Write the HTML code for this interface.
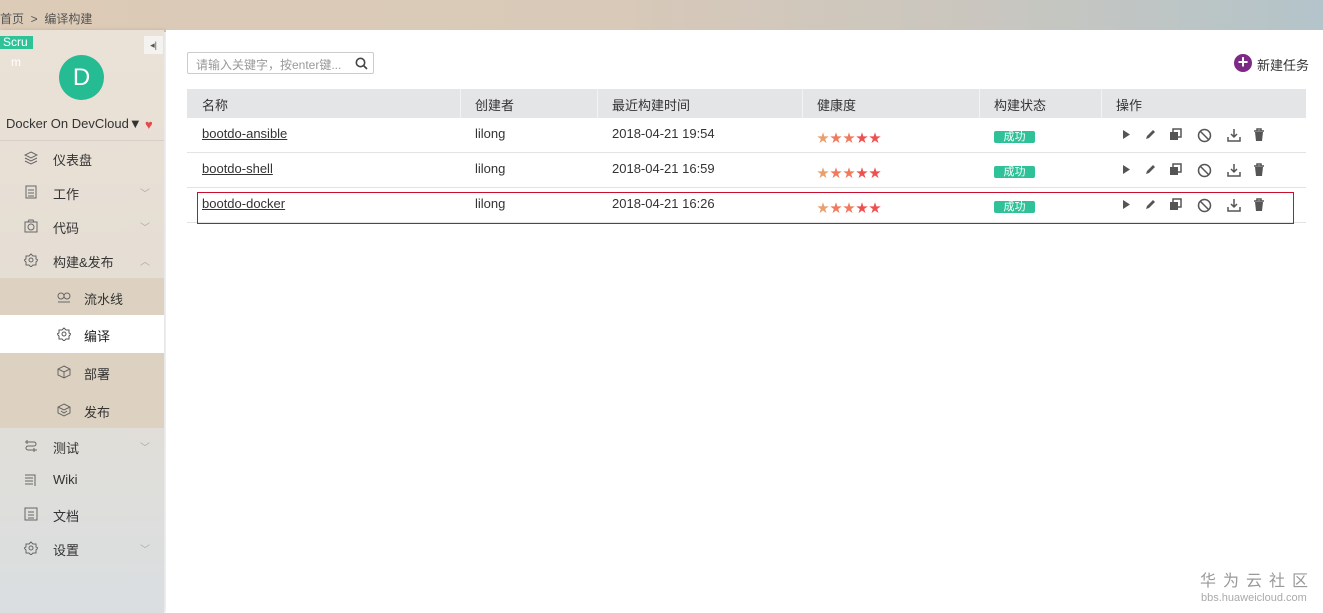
<!DOCTYPE html>
<html><head><meta charset="utf-8"><style>
*{margin:0;padding:0;box-sizing:border-box}
body{width:1323px;height:613px;overflow:hidden;position:relative;font-family:"Liberation Sans","Noto Sans CJK SC",sans-serif;font-size:13px;color:#333;background:#fff}
.top{position:absolute;left:0;top:0;width:1323px;height:32px;background:linear-gradient(90deg,#dccbb6 0%,#d9c9b8 45%,#c9c6bf 75%,#b3c4ca 100%)}
.crumb{position:absolute;left:0;top:10px;font-size:12px;color:#555}
.side{position:absolute;left:0;top:30px;width:164px;height:583px;background:linear-gradient(180deg,#ebe2d7 0%,#e4ddd3 50%,#dadee1 100%);box-shadow:2px 0 4px rgba(0,0,0,.12)}
.abs{position:absolute}
.mi{position:absolute;left:0;width:164px;height:34px;font-size:13px;color:#333}
.mi .t{position:absolute;left:53px;top:9px}
.mi .ic{position:absolute;left:24px;top:10px;width:14px;height:14px}
.mi .ar{position:absolute;left:140px;top:10px;color:#aaa;font-size:10px}
.sub{position:absolute;left:0;top:278px;width:164px;height:150px;background:#ddd2c1}
.si{position:absolute;left:0;width:164px;height:38px}
.si .t{position:absolute;left:84px;top:11px}
.si .ic{position:absolute;left:57px;top:12px;width:14px;height:14px}
.main{position:absolute;left:166px;top:30px;width:1157px;height:583px;background:#fff}
.search{position:absolute;left:187px;top:52px;width:187px;height:22px;border:1px solid #ccc;border-radius:2px;font-size:12px;color:#999;padding:3px 0 0 8px}
.th{position:absolute;left:187px;top:89px;width:1119px;height:29px;background:#e4e5e7}
.row{position:absolute;left:187px;width:1119px;height:35px;border-bottom:1px solid #e3e3e3}
.c{position:absolute;top:8px}
.th .c{top:6px;color:#333}
.sep{position:absolute;top:0;width:1px;height:29px;background:#f3f3f3}
a{color:#333;text-decoration:underline}
.stars{letter-spacing:1px;font-size:12px}
.badge{position:absolute;left:807px;top:13px;width:41px;height:12px;background:#2fc298;border-radius:2px;color:#fff;font-size:11px;line-height:13px;text-align:center}
.ops{position:absolute;left:930px;top:10px}
.ops svg{position:absolute;top:0}
</style></head><body>
<div class="top"><div class="crumb">首页 &nbsp;&gt;&nbsp; 编译构建</div></div>
<div class="side">
  <div class="abs" style="left:0;top:6px;width:33px;height:13px;background:#2fc298;color:#fff;font-size:12px;line-height:13px;padding-left:3px;overflow:hidden">Scru</div>
  <div class="abs" style="left:11px;top:25px;color:#fff;font-size:12px">m</div>
  <div class="abs" style="left:144px;top:6px;width:19px;height:18px;background:#f5f3f0;font-size:9px;text-align:center;line-height:18px;color:#555">◂|</div>
  <div class="abs" style="left:59px;top:25px;width:45px;height:45px;border-radius:50%;background:#26bc93;color:#fff;font-size:24px;text-align:center;line-height:45px">D</div>
  <div class="abs" style="left:6px;top:86px;font-size:13px;color:#333">Docker On DevCloud▼</div>
  <div class="abs" style="left:145px;top:87px;color:#e84a4a;font-size:13px">♥</div>
  <div class="abs" style="left:0;top:110px;width:164px;height:1px;background:#d8cfc4"></div>
</div>
<div class="mi" style="top:141px"><svg class="ic" viewBox="0 0 14 14" fill="none" stroke="#666" stroke-width="1"><path d="M7 1L13 4L7 7L1 4Z M1 7L7 10L13 7 M1 10L7 13L13 10"/></svg><span class="t">仪表盘</span></div>
<div class="mi" style="top:175px"><svg class="ic" viewBox="0 0 14 14" fill="none" stroke="#666"><rect x="2" y="1" width="10" height="12"/><path d="M4 5h6M4 8h6M4 11h6"/></svg><span class="t">工作</span><span class="ar">﹀</span></div>
<div class="mi" style="top:209px"><svg class="ic" viewBox="0 0 14 14" fill="none" stroke="#666"><rect x="1" y="3" width="12" height="10"/><circle cx="7" cy="8" r="3"/><path d="M4 3l1-2h4l1 2"/></svg><span class="t">代码</span><span class="ar">﹀</span></div>
<div class="mi" style="top:243px"><svg class="ic" viewBox="0 0 14 14" fill="none" stroke="#666"><circle cx="7" cy="7" r="2"/><path d="M7 1l2 2h3v3l2 1-2 2v3H9l-2 2-2-2H2V9L0 7l2-1V3h3z"/></svg><span class="t">构建&amp;发布</span><span class="ar">︿</span></div>
<div class="sub"></div>
<div class="si" style="top:278px"><svg class="ic" viewBox="0 0 14 14" fill="none" stroke="#666"><circle cx="4" cy="6" r="3"/><circle cx="10" cy="6" r="3"/><path d="M1 12h12"/></svg><span class="t">流水线</span></div>
<div class="si" style="top:315px;background:#fff"><svg class="ic" viewBox="0 0 14 14" fill="none" stroke="#555"><circle cx="7" cy="7" r="2"/><path d="M7 1l2 2h3v3l2 1-2 2v3H9l-2 2-2-2H2V9L0 7l2-1V3h3z"/></svg><span class="t" style="color:#222">编译</span></div>
<div class="si" style="top:353px"><svg class="ic" viewBox="0 0 14 14" fill="none" stroke="#666"><path d="M7 1l6 3v6l-6 3-6-3V4z M1 4l6 3 6-3 M7 7v6"/></svg><span class="t">部署</span></div>
<div class="si" style="top:391px"><svg class="ic" viewBox="0 0 14 14" fill="none" stroke="#666"><path d="M7 1l6 3v6l-6 3-6-3V4z M1 4l6 3 6-3 M4 8l3 2 3-2"/></svg><span class="t">发布</span></div>
<div class="mi" style="top:429px"><svg class="ic" viewBox="0 0 14 14" fill="none" stroke="#666"><path d="M1 3h9a2 2 0 010 4H4a2 2 0 000 4h9 M3 1v4 M10 9v4"/></svg><span class="t">测试</span><span class="ar">﹀</span></div>
<div class="mi" style="top:463px"><svg class="ic" viewBox="0 0 14 14" fill="none" stroke="#666"><path d="M1 2h10v11 M1 5h8 M1 8h8 M1 11h8"/></svg><span class="t">Wiki</span></div>
<div class="mi" style="top:497px"><svg class="ic" viewBox="0 0 14 14" fill="none" stroke="#666"><rect x="1" y="1" width="12" height="12"/><path d="M4 5h6M4 8h6M4 11h6"/></svg><span class="t">文档</span></div>
<div class="mi" style="top:531px"><svg class="ic" viewBox="0 0 14 14" fill="none" stroke="#666"><circle cx="7" cy="7" r="2"/><path d="M7 1l2 2h3v3l2 1-2 2v3H9l-2 2-2-2H2V9L0 7l2-1V3h3z"/></svg><span class="t">设置</span><span class="ar">﹀</span></div>
<div class="main"></div>
<div class="search">请输入关键字，按enter键...<svg style="position:absolute;right:5px;top:4px" width="13" height="13" viewBox="0 0 13 13" fill="none" stroke="#444" stroke-width="1.6"><circle cx="5.5" cy="5.5" r="4.2"/><path d="M8.5 8.5l3.5 3.5"/></svg></div>
<div class="abs" style="left:1234px;top:54px;width:18px;height:18px;border-radius:50%;background:#7d2a86;color:#fff;font-size:18px;line-height:17px;text-align:center;font-weight:bold">+</div>
<div class="abs" style="left:1257px;top:55px;font-size:13px;color:#333">新建任务</div>
<div class="th">
  <span class="c" style="left:15px">名称</span><span class="sep" style="left:273px"></span>
  <span class="c" style="left:288px">创建者</span><span class="sep" style="left:410px"></span>
  <span class="c" style="left:425px">最近构建时间</span><span class="sep" style="left:615px"></span>
  <span class="c" style="left:630px">健康度</span><span class="sep" style="left:792px"></span>
  <span class="c" style="left:807px">构建状态</span><span class="sep" style="left:914px"></span>
  <span class="c" style="left:929px">操作</span>
</div>
<div class="row" style="top:118px"><span class="c" style="left:15px"><a>bootdo-ansible</a></span><span class="c" style="left:288px">lilong</span><span class="c" style="left:425px">2018-04-21 19:54</span><span class="c stars" style="left:630px;top:11px"><span style="color:#e9a06c">★</span><span style="color:#ef7a5e">★★</span><span style="color:#ee4f4f">★★</span></span><div class="badge">成功</div>
<div class="ops"><svg style="left:4px" width="10" height="12"><path d="M2 2l7 4.5L2 11z" fill="#555"/></svg><svg style="left:27px" width="13" height="13"><path d="M2 11l1-3 6-6 2 2-6 6z" fill="#555"/></svg><svg style="left:52px" width="13" height="13"><rect x="4" y="1" width="8" height="8" fill="none" stroke="#555" stroke-width="1.5"/><rect x="1" y="4" width="8" height="8" fill="#555"/></svg><svg style="left:80px" width="15" height="15" fill="none" stroke="#555" stroke-width="1.5"><circle cx="7.5" cy="7.5" r="6"/><path d="M3.5 3.5l8 8"/></svg><svg style="left:110px" width="14" height="14" fill="none" stroke="#555" stroke-width="1.5"><path d="M7 1v8M4 6l3 3 3-3M1 9v4h12V9"/></svg><svg style="left:136px" width="12" height="13"><path d="M1 3h10M4 3V1h4v2" stroke="#555" stroke-width="1.5" fill="none"/><path d="M2 4h8l-1 9H3z" fill="#555"/></svg></div></div>
<div class="row" style="top:153px"><span class="c" style="left:15px"><a>bootdo-shell</a></span><span class="c" style="left:288px">lilong</span><span class="c" style="left:425px">2018-04-21 16:59</span><span class="c stars" style="left:630px;top:11px"><span style="color:#e9a06c">★</span><span style="color:#ef7a5e">★★</span><span style="color:#ee4f4f">★★</span></span><div class="badge">成功</div>
<div class="ops"><svg style="left:4px" width="10" height="12"><path d="M2 2l7 4.5L2 11z" fill="#555"/></svg><svg style="left:27px" width="13" height="13"><path d="M2 11l1-3 6-6 2 2-6 6z" fill="#555"/></svg><svg style="left:52px" width="13" height="13"><rect x="4" y="1" width="8" height="8" fill="none" stroke="#555" stroke-width="1.5"/><rect x="1" y="4" width="8" height="8" fill="#555"/></svg><svg style="left:80px" width="15" height="15" fill="none" stroke="#555" stroke-width="1.5"><circle cx="7.5" cy="7.5" r="6"/><path d="M3.5 3.5l8 8"/></svg><svg style="left:110px" width="14" height="14" fill="none" stroke="#555" stroke-width="1.5"><path d="M7 1v8M4 6l3 3 3-3M1 9v4h12V9"/></svg><svg style="left:136px" width="12" height="13"><path d="M1 3h10M4 3V1h4v2" stroke="#555" stroke-width="1.5" fill="none"/><path d="M2 4h8l-1 9H3z" fill="#555"/></svg></div></div>
<div class="row" style="top:188px"><span class="c" style="left:15px"><a>bootdo-docker</a></span><span class="c" style="left:288px">lilong</span><span class="c" style="left:425px">2018-04-21 16:26</span><span class="c stars" style="left:630px;top:11px"><span style="color:#e9a06c">★</span><span style="color:#ef7a5e">★★</span><span style="color:#ee4f4f">★★</span></span><div class="badge">成功</div>
<div class="ops"><svg style="left:4px" width="10" height="12"><path d="M2 2l7 4.5L2 11z" fill="#555"/></svg><svg style="left:27px" width="13" height="13"><path d="M2 11l1-3 6-6 2 2-6 6z" fill="#555"/></svg><svg style="left:52px" width="13" height="13"><rect x="4" y="1" width="8" height="8" fill="none" stroke="#555" stroke-width="1.5"/><rect x="1" y="4" width="8" height="8" fill="#555"/></svg><svg style="left:80px" width="15" height="15" fill="none" stroke="#555" stroke-width="1.5"><circle cx="7.5" cy="7.5" r="6"/><path d="M3.5 3.5l8 8"/></svg><svg style="left:110px" width="14" height="14" fill="none" stroke="#555" stroke-width="1.5"><path d="M7 1v8M4 6l3 3 3-3M1 9v4h12V9"/></svg><svg style="left:136px" width="12" height="13"><path d="M1 3h10M4 3V1h4v2" stroke="#555" stroke-width="1.5" fill="none"/><path d="M2 4h8l-1 9H3z" fill="#555"/></svg></div></div>
<div class="abs" style="left:197px;top:192px;width:1097px;height:32px;border:1px solid #c8102e"></div>
<div class="abs" style="left:1200px;top:574px;font-size:16px;line-height:16px;color:#999;letter-spacing:7px">华为云社区</div>
<div class="abs" style="left:1201px;top:593px;font-size:11px;line-height:11px;color:#aaa">bbs.huaweicloud.com</div>
</body></html>
